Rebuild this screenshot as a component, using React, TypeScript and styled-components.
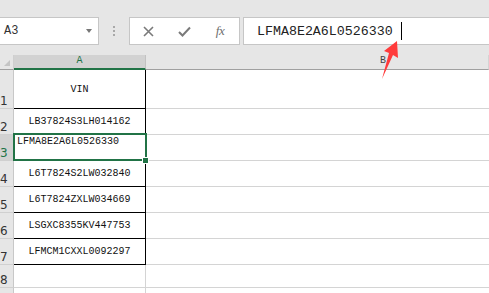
import React from "react";
import styled, { createGlobalStyle } from "styled-components";

const Global = createGlobalStyle`
  html, body { margin: 0; padding: 0; background: #ffffff; overflow: hidden; }
  body { width: 489px; height: 293px; font-family: "Liberation Sans", Arial, sans-serif; }
`;

const Page = styled.div`
  position: relative;
  width: 489px;
  height: 293px;
  overflow: hidden;
  background: #ffffff;
`;

const TopBar = styled.div`
  height: 55px;
  box-sizing: border-box;
  padding-top: 17px;
  background: #e6e6e6;
  display: flex;
  align-items: flex-start;
`;

const NameBox = styled.div`
  position: relative;
  margin-left: -1px;
  width: 100px;
  height: 28px;
  box-sizing: border-box;
  border: 1px solid #c6c6c6;
  background: #ffffff;
  display: flex;
  align-items: center;
  padding-left: 4px;
  font-family: "Liberation Mono", monospace;
  font-size: 12px;
  color: #333;
`;

const DropTri = styled.span`
  position: absolute;
  right: 6px;
  top: 11px;
  width: 0;
  height: 0;
  border-left: 3.5px solid transparent;
  border-right: 3.5px solid transparent;
  border-top: 4px solid #777;
`;

const Grip = styled.div`
  width: 30px;
  height: 28px;
  display: flex;
  flex-direction: column;
  align-items: center;
  justify-content: center;
  gap: 2px;
`;

const Dot = styled.span`
  width: 2px;
  height: 2px;
  background: #a8a8a8;
`;

const ButtonBox = styled.div`
  width: 111px;
  height: 28px;
  box-sizing: border-box;
  border: 1px solid #c6c6c6;
  background: #ffffff;
  display: flex;
  align-items: center;
`;

const IconSlot = styled.div`
  width: 36px;
  height: 26px;
  display: flex;
  align-items: center;
  justify-content: center;
  color: #7a7a7a;
`;

const Fx = styled.span`
  font-family: "Liberation Serif", "DejaVu Serif", serif;
  font-style: italic;
  font-size: 13px;
  color: #6e6e6e;
  letter-spacing: -0.5px;
`;

const FormulaBox = styled.div`
  margin-left: 3px;
  flex: 1;
  margin-right: -4px;
  height: 28px;
  box-sizing: border-box;
  border: 1px solid #c6c6c6;
  background: #ffffff;
  display: flex;
  align-items: center;
  padding-left: 13px;
  font-family: "Liberation Mono", monospace;
  font-size: 13.3px;
  color: #222;
`;

const Caret = styled.span`
  display: inline-block;
  width: 1px;
  height: 18px;
  background: #000;
  margin-left: 8px;
`;

const Sheet = styled.div`
  display: grid;
  grid-template-columns: 14px 132px 1fr;
  grid-template-rows: 15px 39px 26px 26px 26px 26px 26px 26px 23px 26px;
`;

const Corner = styled.div`
  position: relative;
  background: #e6e6e6;
  box-sizing: border-box;
  border-bottom: 1px solid #a0a0a0;
  border-right: 1px solid #cfcfcf;
`;

const CornerTri = styled.span`
  position: absolute;
  right: 3px;
  bottom: 3px;
  width: 0;
  height: 0;
  border-left: 6px solid transparent;
  border-bottom: 6px solid #c4c4c4;
`;

const ColHead = styled.div<{ $active?: boolean }>`
  box-sizing: border-box;
  background: ${(p) => (p.$active ? "#d2d2d2" : "#e6e6e6")};
  border-right: 1px solid ${(p) => (p.$active ? "#c2c2c2" : "#d4d4d4")};
  border-bottom: ${(p) => (p.$active ? "2px solid #217346" : "1px solid #a0a0a0")};
  color: ${(p) => (p.$active ? "#217346" : "#444")};
  font-family: "Liberation Mono", monospace;
  font-size: 10px;
  line-height: 12px;
  text-align: center;
  overflow: hidden;
`;

const ColHeadWide = styled(ColHead)`
  padding-left: 234px;
  text-align: left;
`;

const RowHead = styled.div<{ $active?: boolean }>`
  box-sizing: border-box;
  background: ${(p) => (p.$active ? "#d2d2d2" : "#e6e6e6")};
  border-bottom: 1px solid #d0d0d0;
  border-right: 1px solid #c8c8c8;
  color: ${(p) => (p.$active ? "#217346" : "#333")};
  font-family: "DejaVu Sans", "Liberation Sans", sans-serif;
  font-size: 12px;
  line-height: 12px;
  display: flex;
  align-items: flex-end;
  padding-left: 0px;
  padding-bottom: 1px;
  overflow: hidden;
`;

const Cell = styled.div<{ $boxed?: boolean }>`
  box-sizing: border-box;
  border-right: 1px solid ${(p) => (p.$boxed ? "#000" : "#d4d4d4")};
  border-bottom: 1px solid ${(p) => (p.$boxed ? "#000" : "#d4d4d4")};
  display: flex;
  align-items: center;
  justify-content: center;
  font-family: "Liberation Mono", monospace;
  font-size: 10px;
  color: #111;
  white-space: nowrap;
`;

const PlainCell = styled.div`
  box-sizing: border-box;
  border-bottom: 1px solid #d4d4d4;
`;

const EditCell = styled.div`
  position: relative;
  box-sizing: border-box;
  border-right: 1px solid #000;
  border-bottom: 1px solid #000;
  padding: 1px 0 0 3px;
  font-family: "Liberation Mono", monospace;
  font-size: 10px;
  line-height: 12px;
  color: #111;
  white-space: nowrap;
`;

const Selection = styled.span`
  position: absolute;
  left: -1px;
  top: -2px;
  right: -2px;
  bottom: -1px;
  border: 2px solid #217346;
  pointer-events: none;
`;

const Handle = styled.span`
  position: absolute;
  right: -4px;
  bottom: -4px;
  width: 5px;
  height: 5px;
  background: #217346;
  border: 1px solid #fff;
`;

const ArrowLayer = styled.svg`
  position: absolute;
  left: 0;
  top: 0;
  pointer-events: none;
`;

const rows: { n: number; v: string }[] = [
  { n: 1, v: "VIN" },
  { n: 2, v: "LB37824S3LH014162" },
  { n: 3, v: "LFMA8E2A6L0526330" },
  { n: 4, v: "L6T7824S2LW032840" },
  { n: 5, v: "L6T7824ZXLW034669" },
  { n: 6, v: "LSGXC8355KV447753" },
  { n: 7, v: "LFMCM1CXXL0092297" },
];

export default function App() {
  return (
    <Page>
      <Global />
      <TopBar>
        <NameBox>
          A3
          <DropTri />
        </NameBox>
        <Grip>
          <Dot />
          <Dot />
          <Dot />
        </Grip>
        <ButtonBox>
          <IconSlot>
            <svg width="11" height="11" viewBox="0 0 11 11">
              <path d="M1 1 L10 10 M10 1 L1 10" stroke="#7a7a7a" strokeWidth="1.6" fill="none" />
            </svg>
          </IconSlot>
          <IconSlot>
            <svg width="13" height="11" viewBox="0 0 13 11">
              <path d="M1 6 L4.5 9.5 L12 1.5" stroke="#7a7a7a" strokeWidth="2" fill="none" />
            </svg>
          </IconSlot>
          <IconSlot>
            <Fx>fx</Fx>
          </IconSlot>
        </ButtonBox>
        <FormulaBox>
          LFMA8E2A6L0526330
          <Caret />
        </FormulaBox>
      </TopBar>
      <Sheet>
        <Corner>
          <CornerTri />
        </Corner>
        <ColHead $active>A</ColHead>
        <ColHeadWide>B</ColHeadWide>
        {rows.map((r) => (
          <React.Fragment key={r.n}>
            <RowHead $active={r.n === 3}>{r.n}</RowHead>
            {r.n === 3 ? (
              <EditCell>
                {r.v}
                <Selection />
                <Handle />
              </EditCell>
            ) : (
              <Cell $boxed>{r.v}</Cell>
            )}
            <PlainCell />
          </React.Fragment>
        ))}
        <RowHead>8</RowHead>
        <Cell />
        <PlainCell />
        <RowHead />
        <Cell />
        <PlainCell />
      </Sheet>
      <ArrowLayer width="489" height="293" viewBox="0 0 489 293">
        <polygon
          points="397,41 384,51 389,53 382,79 393,55 398,58"
          fill="#ff3b3b"
        />
      </ArrowLayer>
    </Page>
  );
}
